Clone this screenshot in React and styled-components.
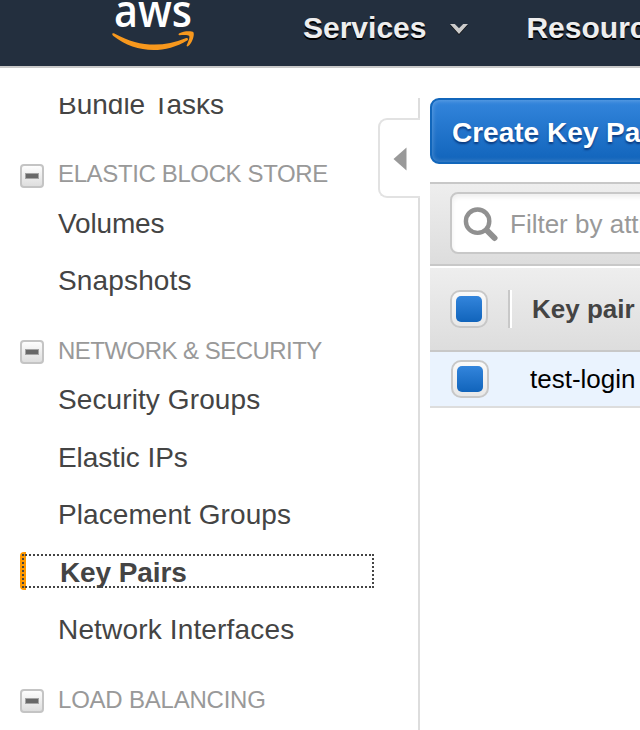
import React from "react";
import styled, { createGlobalStyle } from "styled-components";

const GlobalStyle = createGlobalStyle`
  * { box-sizing: border-box; }
  html, body { margin: 0; background: #fff; overflow: hidden; }
  body { font-family: "Liberation Sans", Arial, sans-serif; color: #444; }
`;

const Page = styled.div`
  width: 640px;
  height: 730px;
  overflow: hidden;
  display: flex;
  flex-direction: column;
`;

const TopBar = styled.header`
  flex: none;
  height: 68px;
  display: flex;
  background: #232f3e;
  border-bottom: 2px solid #c9c9c9;
  overflow: hidden;
  white-space: nowrap;
`;

const Logo = styled.div`
  width: 82px;
  height: 52px;
  margin-left: 112px;
  flex: none;
`;

const LogoWord = styled.div`
  width: 90px;
  height: 20px;
  margin-left: -4px;
  font: 600 46px/18px "Open Sans", sans-serif;
  transform: scaleX(0.9);
  color: #fff;
  text-align: center;
`;

const Smile = styled.svg`
  display: block;
  width: 82px;
  height: 20px;
  margin-top: 11px;
`;

const NavItem = styled.div`
  display: flex;
  align-items: center;
  height: 56px;
  margin-left: ${(p) => p.$gap}px;
  font-size: 30px;
  font-weight: bold;
  color: #eee;
  text-shadow: 0 2px 0 #000;
`;

const Chevron = styled.svg`
  width: 18px;
  height: 11px;
  margin: 2px 0 0 24px;
`;

const Body = styled.div`
  flex: 1;
  min-height: 0;
  display: flex;
  padding-top: 30px;
`;

const Sidebar = styled.nav`
  width: 378px;
  flex: none;
  overflow: hidden;
  padding-left: 20px;
`;

const NavLink = styled.div`
  height: 32px;
  margin-top: ${(p) => p.$gap}px;
  padding-left: 38px;
  font-size: 28px;
  line-height: 34px;
  letter-spacing: ${(p) => p.$track || 0}px;
  white-space: nowrap;
`;

const ActiveLink = styled.div`
  width: 354px;
  height: 38px;
  margin: ${(p) => p.$gap - 2}px 0 -2px;
  display: flex;
  align-items: center;
  border-radius: 4px 0 0 4px;
  background: linear-gradient(90deg, #ff9900 6px, transparent 6px);
`;

const FocusBox = styled.div`
  flex: 1;
  height: 34px;
  margin-left: 2px;
  padding: 0 0 0 36px;
  border: 2px dotted #444;
  font-size: 28px;
  font-weight: bold;
  line-height: 34px;
  letter-spacing: -0.1px;
`;

const Heading = styled.div`
  display: flex;
  height: 28px;
  margin-top: ${(p) => p.$gap}px;
  font-size: 24px;
  line-height: 28px;
  letter-spacing: ${(p) => p.$track || 0}px;
  color: #999;
  white-space: nowrap;
`;

const Collapse = styled.span`
  width: 24px;
  height: 24px;
  flex: none;
  margin: ${(p) => p.$top}px 14px 0 0;
  display: grid;
  place-items: center;
  border: 2px solid #c4c4c4;
  border-radius: 4px;
  background: linear-gradient(#fdfdfd, #dedede);

  &::after {
    content: "";
    width: 12px;
    height: 4px;
    background: #686868;
    border: 1px solid #a4a4a4;
  }
`;

const Divider = styled.div`
  width: 42px;
  flex: none;
  display: flex;
  flex-direction: column;
  align-items: flex-end;
`;

const Rule = styled.div`
  width: 2px;
  ${(p) => (p.$height ? `height: ${p.$height}px` : "flex: 1")};
  background: #ddd;
`;

const Handle = styled.div`
  width: 42px;
  height: 80px;
  display: flex;
  align-items: center;
  padding: 2px 0 0 13px;
  border: 2px solid #e2e2e2;
  border-right: 0;
  border-radius: 9px 0 0 9px;
`;

const Main = styled.main`
  width: 210px;
  flex: none;
  margin-left: 10px;
  overflow: hidden;
  white-space: nowrap;
`;

const CreateButton = styled.div`
  width: 260px;
  height: 66px;
  padding-left: 20px;
  border: 2px solid #1166bb;
  border-radius: 9px;
  background: linear-gradient(#3385dc, #1164bb);
  box-shadow: inset 0 0 4px 1px rgba(255, 255, 255, 0.22);
  color: #fff;
  font-size: 28px;
  font-weight: bold;
  line-height: 66px;
  text-shadow: 0 2px 2px rgba(0, 30, 90, 0.65);
`;

const FilterBar = styled.div`
  height: 84px;
  margin-top: 18px;
  padding: 8px 0 0 20px;
  border: solid #c8c8c8;
  border-width: 2px 0;
  background: linear-gradient(#eee, #ddd);
`;

const SearchField = styled.div`
  width: 320px;
  height: 62px;
  display: flex;
  align-items: center;
  padding: 2px 0 0 10px;
  border: 2px solid #c8c8c8;
  border-radius: 8px;
  background: #fff;
  box-shadow: inset 0 3px 5px #eee;
  color: #999;
  font-size: 26px;

  svg { flex: none; margin: 0 12px 0 0; }
`;

const TableHead = styled.div`
  height: 86px;
  display: flex;
  align-items: center;
  padding-left: 20px;
  border-top: 2px solid #fff;
  border-bottom: 2px solid #c8c8c8;
  background: linear-gradient(#eee, #ddd);
  font-size: 26px;
  font-weight: bold;
`;

const ColumnRule = styled.span`
  width: 4px;
  height: 38px;
  flex: none;
  margin: 0 20px;
  border-left: 2px solid #c8c8c8;
  background: #fff;
`;

const TableRow = styled.div`
  height: 56px;
  display: flex;
  align-items: center;
  padding-left: 21px;
  gap: 41px;
  border-bottom: 2px solid #ddd;
  background: #eaf3fe;
  color: #000;
  font-size: 26px;
`;

const Checkbox = styled.span`
  width: 38px;
  height: 38px;
  flex: none;
  padding: 4px;
  border: 2px solid #c8c8c8;
  border-radius: 10px;
  background: linear-gradient(#fafafa, #e8e8e8);

  &::after {
    content: "";
    display: block;
    height: 26px;
    border-radius: 5px;
    background: linear-gradient(#3385dc, #1164bb);
  }
`;

export default function App() {
  return (
    <Page>
      <GlobalStyle />
      <TopBar>
        <Logo>
          <LogoWord>aws</LogoWord>
          <Smile viewBox="0 0 82 20" fill="#f7981d">
            <path d="M.2 3.2C.2 2 1.6 2 2.8 2.7C27 16.2 51 16.5 73.5 7.2C75.6 6.4 76.9 8.2 75.2 9.5C52 23.5 23 22.2 1 4.8Z" />
            <path d="M67.5 4.3C66.2 4.3 66.2 3 67.4 2.3C71.3-.2 80.2-.3 81.4 1.3C82.7 3.3 80.7 11.5 76.3 15.1C75.3 16 74.3 15.3 74.8 14.1C76.1 10.8 78.1 6.2 77.2 5C76.1 3.7 71 4 67.5 4.3Z" />
          </Smile>
        </Logo>
        <NavItem $gap={109}>
          Services
          <Chevron viewBox="0 0 18 11">
            <path d="M0 1H4.8L9 5.2L13.2 1H18L9 11Z" fill="#111" />
            <path d="M0 0H4.8L9 4.2L13.2 0H18L9 10Z" fill="#ccc" />
          </Chevron>
        </NavItem>
        <NavItem $gap={58}>Resource Groups</NavItem>
      </TopBar>
      <Body>
        <Sidebar>
          <NavLink $gap={-10}>Bundle Tasks</NavLink>
          <Heading $gap={40} $track={-0.37}><Collapse $top={4} />ELASTIC BLOCK STORE</Heading>
          <NavLink $gap={19} $track={-0.15}>Volumes</NavLink>
          <NavLink $gap={25} $track={0.15}>Snapshots</NavLink>
          <Heading $gap={41} $track={-0.53}><Collapse $top={3} />NETWORK &amp; SECURITY</Heading>
          <NavLink $gap={18} $track={0.1}>Security Groups</NavLink>
          <NavLink $gap={26} $track={-0.1}>Elastic IPs</NavLink>
          <NavLink $gap={25} $track={0.07}>Placement Groups</NavLink>
          <ActiveLink $gap={24}><FocusBox>Key Pairs</FocusBox></ActiveLink>
          <NavLink $gap={25} $track={0.16}>Network Interfaces</NavLink>
          <Heading $gap={41} $track={-0.22}><Collapse $top={3} />LOAD BALANCING</Heading>
        </Sidebar>
        <Divider>
          <Rule $height={20} />
          <Handle>
            <svg width="14" height="24" viewBox="0 0 14 24">
              <path d="M13.5 .5V23.5L.5 12Z" fill="#999" />
            </svg>
          </Handle>
          <Rule />
        </Divider>
        <Main>
          <CreateButton>Create Key Pair</CreateButton>
          <FilterBar>
            <SearchField>
              <svg width="36" height="36" viewBox="0 0 36 36" fill="none" stroke="#909090">
                <circle cx="15.6" cy="15.2" r="11.7" strokeWidth="4.4" />
                <path d="M25 24.5L32.5 32" strokeWidth="6" strokeLinecap="round" />
              </svg>
              Filter by attributes
            </SearchField>
          </FilterBar>
          <TableHead>
            <Checkbox />
            <ColumnRule />
            Key pair name
          </TableHead>
          <TableRow>
            <Checkbox />
            test-login
          </TableRow>
        </Main>
      </Body>
    </Page>
  );
}
